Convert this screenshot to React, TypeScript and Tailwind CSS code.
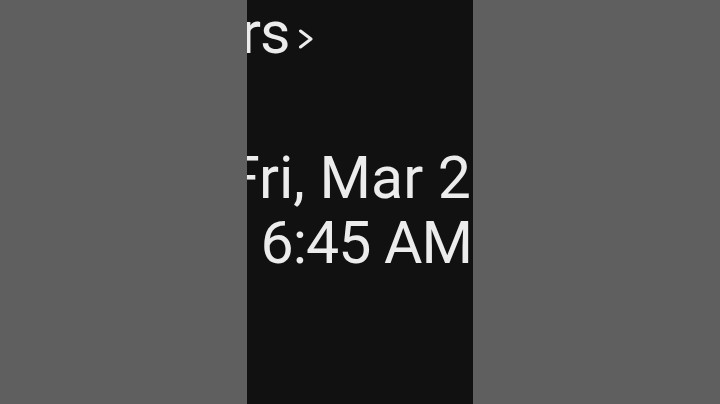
import React from 'react'

const Chevron = () => (
  <svg width="16" height="20" viewBox="0 0 16 20" className="ml-[9px] mt-[29px] shrink-0">
    <polyline points="2.5,2 13,10 2.5,18" fill="none" stroke="#ececec" strokeWidth="3" strokeLinecap="round" strokeLinejoin="round" />
  </svg>
)

const App = () => {
  return (
    <div className="w-[720px] h-[404px] bg-[#5f5f5f] flex justify-center overflow-hidden">
      <div className="w-[226px] h-full bg-[#111111] flex flex-col overflow-hidden text-[#ececec] font-['Roboto',sans-serif] text-[59px] leading-[65px]">
        <div className="flex items-start h-[65px] whitespace-nowrap tracking-[-1px]">
          <span className="-ml-[6px]">rs</span>
          <Chevron />
        </div>

        <div className="mt-[80px] flex flex-col items-end pr-[1px] whitespace-nowrap">
          <span className="mr-[1px]">Fri, Mar 2</span>
          <span className="tracking-[-1px]">6:45 AM</span>
        </div>
      </div>
    </div>
  )
}

export default App
